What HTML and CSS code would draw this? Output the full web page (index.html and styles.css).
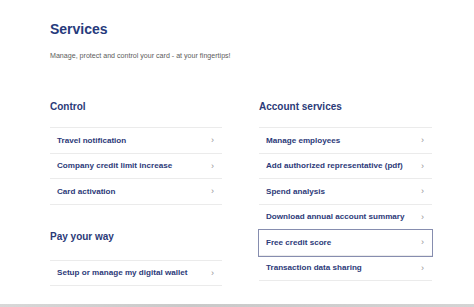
FILE: index.html
```html
<!DOCTYPE html>
<html lang="en">
<head>
    <meta charset="UTF-8">
    <meta name="viewport" content="width=device-width, initial-scale=1.0">
    <title>Services</title>
    <link rel="stylesheet" href="styles.css">
</head>
<body>
    <div class="services_wrap">
        <h1>Services</h1>
        <p class="lead">Manage, protect and control your card - at your fingertips!</p>
        <div class="cols">
            <div class="col">
                <h2>Control</h2>
                <ul class="links">
                    <li><span>Travel notification</span><i>&rsaquo;</i></li>
                    <li><span>Company credit limit increase</span><i>&rsaquo;</i></li>
                    <li><span>Card activation</span><i>&rsaquo;</i></li>
                </ul>
                <h2 class="pay_title">Pay your way</h2>
                <ul class="links pay_links">
                    <li><span>Setup or manage my digital wallet</span><i>&rsaquo;</i></li>
                </ul>
            </div>
            <div class="col">
                <h2>Account services</h2>
                <ul class="links">
                    <li><span>Manage employees</span><i>&rsaquo;</i></li>
                    <li><span>Add authorized representative (pdf)</span><i>&rsaquo;</i></li>
                    <li><span>Spend analysis</span><i>&rsaquo;</i></li>
                    <li><span>Download annual account summary</span><i>&rsaquo;</i></li>
                    <li class="on"><span>Free credit score</span><i>&rsaquo;</i></li>
                    <li><span>Transaction data sharing</span><i>&rsaquo;</i></li>
                </ul>
            </div>
        </div>
    </div>
    <div class="bottom_bar"></div>
</body>
</html>
```

FILE: styles.css
```css
* {
    margin:0; padding:0; box-sizing:border-box; list-style:none;
}
html, body {height:100%;}
body {
    display:flex; flex-direction:column; background:#fff;
    font-family:"Liberation Sans", Arial, sans-serif; color:#2b3a78;
}
.services_wrap {padding:21px 0 0 50px;}
.services_wrap h1 {font-size:14px; line-height:16px; font-weight:bold; color:#263a7c;}
.services_wrap .lead {
    font-size:7.1px; line-height:9px; color:#5c5c5c; margin-top:15px;
}
.cols {display:flex; gap:37px; margin-top:40px;}
.col {width:172px;}
.col:last-child {width:173px;}
.col h2 {font-size:10px; line-height:12px; font-weight:bold; color:#2b3a78;}
.links {margin-top:14px; border-top:1px solid #ebebeb;}
.links li {
    display:flex; align-items:center; justify-content:space-between;
    height:25.5px; padding:0 8px 0 7px; border-bottom:1px solid #ebebeb;
    font-size:8.1px; font-weight:bold; color:#2d3a79;
}
.links li i {font-style:normal; font-weight:normal; font-size:9px; color:#959595;}
.links li.on {outline:1px solid #868daf;}
.col .pay_title {margin-top:26px;}
.pay_links {margin-top:17px;}
.bottom_bar {
    margin-top:auto; height:3px;
    background:linear-gradient(to right, #d8d8d8, #c9c9c9 40%, #d4d4d4);
}
```
